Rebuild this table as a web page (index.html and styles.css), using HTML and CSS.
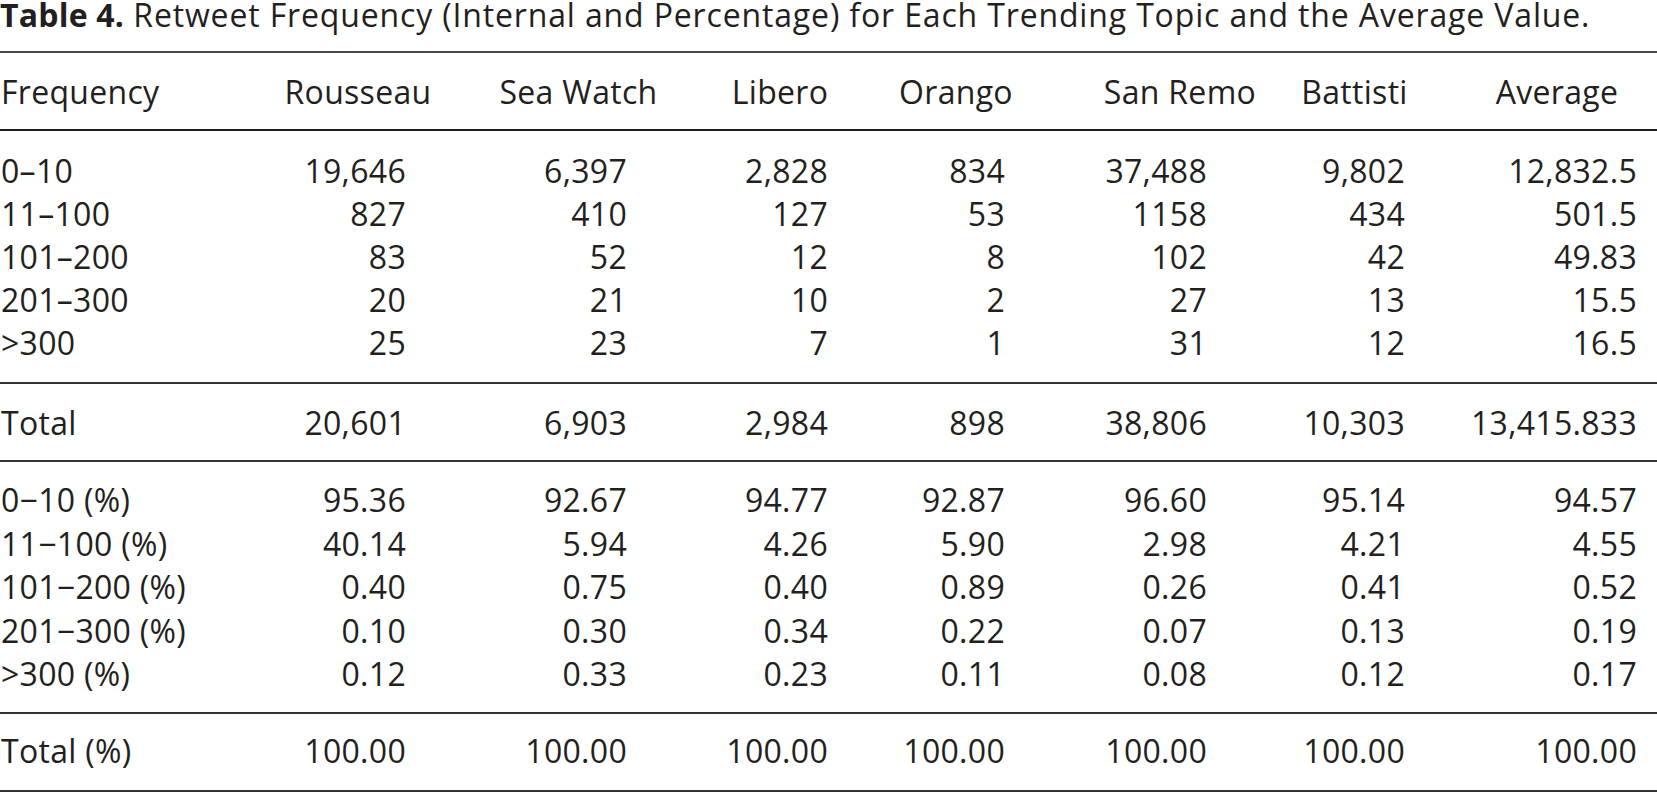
FILE: index.html
```html
<!DOCTYPE html>
<html lang="en">
<head>
<meta charset="utf-8">
<title>Table 4. Retweet Frequency</title>
<link rel="stylesheet" href="styles.css">
</head>
<body>
<div class="page">
  <p class="caption"><span class="label">Table 4.</span> Retweet Frequency (Internal and Percentage) for Each Trending Topic and the Average Value.</p>
  <table class="freq">
    <colgroup>
      <col class="c-label">
      <col class="c-rousseau">
      <col class="c-seawatch">
      <col class="c-libero">
      <col class="c-orango">
      <col class="c-sanremo">
      <col class="c-battisti">
      <col class="c-average">
    </colgroup>
    <thead>
      <tr>
        <th>Frequency</th><th>Rousseau</th><th>Sea Watch</th><th>Libero</th><th>Orango</th><th>San Remo</th><th>Battisti</th><th>Average</th>
      </tr>
    </thead>
    <tbody class="grp-counts">
      <tr><td>0–10</td><td>19,646</td><td>6,397</td><td>2,828</td><td>834</td><td>37,488</td><td>9,802</td><td>12,832.5</td></tr>
      <tr><td>11–100</td><td>827</td><td>410</td><td>127</td><td>53</td><td>1158</td><td>434</td><td>501.5</td></tr>
      <tr><td>101–200</td><td>83</td><td>52</td><td>12</td><td>8</td><td>102</td><td>42</td><td>49.83</td></tr>
      <tr><td>201–300</td><td>20</td><td>21</td><td>10</td><td>2</td><td>27</td><td>13</td><td>15.5</td></tr>
      <tr><td>&gt;300</td><td>25</td><td>23</td><td>7</td><td>1</td><td>31</td><td>12</td><td>16.5</td></tr>
    </tbody>
    <tbody class="grp-total">
      <tr><td>Total</td><td>20,601</td><td>6,903</td><td>2,984</td><td>898</td><td>38,806</td><td>10,303</td><td>13,415.833</td></tr>
    </tbody>
    <tbody class="grp-pct">
      <tr><td>0−10 (%)</td><td>95.36</td><td>92.67</td><td>94.77</td><td>92.87</td><td>96.60</td><td>95.14</td><td>94.57</td></tr>
      <tr><td>11−100 (%)</td><td>40.14</td><td>5.94</td><td>4.26</td><td>5.90</td><td>2.98</td><td>4.21</td><td>4.55</td></tr>
      <tr><td>101−200 (%)</td><td>0.40</td><td>0.75</td><td>0.40</td><td>0.89</td><td>0.26</td><td>0.41</td><td>0.52</td></tr>
      <tr><td>201−300 (%)</td><td>0.10</td><td>0.30</td><td>0.34</td><td>0.22</td><td>0.07</td><td>0.13</td><td>0.19</td></tr>
      <tr><td>&gt;300 (%)</td><td>0.12</td><td>0.33</td><td>0.23</td><td>0.11</td><td>0.08</td><td>0.12</td><td>0.17</td></tr>
    </tbody>
    <tbody class="grp-pct-total">
      <tr><td>Total (%)</td><td>100.00</td><td>100.00</td><td>100.00</td><td>100.00</td><td>100.00</td><td>100.00</td><td>100.00</td></tr>
    </tbody>
  </table>
</div>
</body>
</html>
```

FILE: styles.css
```css
html, body {
  margin: 0;
  padding: 0;
  background: #ffffff;
}

.page {
  width: 1657px;
  font-family: "Open Sans", "Noto Sans", sans-serif;
  font-size: 32px;
  color: #231f20;
}

.caption {
  margin: 0 0 22px 0;
  line-height: 29px;
  white-space: nowrap;
  letter-spacing: 0.85px;
}

.caption .label {
  font-weight: 700;
  letter-spacing: 0.2px;
}

.freq {
  width: 100%;
  table-layout: fixed;
  border-collapse: collapse;
  border-top: 2px solid #4a4a4a;
  letter-spacing: 0.3px;
}

.c-label { width: 250px; }
.c-rousseau { width: 190px; }
.c-seawatch { width: 230px; }
.c-libero { width: 180px; }
.c-orango { width: 180px; }
.c-sanremo { width: 260px; }
.c-battisti { width: 140px; }
.c-average { width: 227px; }

.freq th,
.freq td {
  padding: 0;
  line-height: 43px;
  white-space: nowrap;
  font-weight: 400;
}

.freq thead {
  border-bottom: 2px solid #1e1e1e;
}

.freq thead th {
  padding-top: 17px;
  padding-bottom: 16px;
  text-align: center;
}

.freq tbody {
  border-bottom: 2px solid #333;
}

.freq td {
  text-align: right;
}

.freq th:first-child,
.freq td:first-child {
  text-align: left;
  padding-left: 1px;
}

/* vertical rhythm of each row group */
.grp-counts tr:first-child td { padding-top: 18px; }
.grp-counts tr:last-child td { padding-bottom: 18px; }

.grp-total td { padding-top: 17px; padding-bottom: 16px; }

.grp-pct td { line-height: 43.6px; }
.grp-pct tr:first-child td { padding-top: 16px; }
.grp-pct tr:last-child td { padding-bottom: 16px; }

.grp-pct-total td { padding-top: 15px; padding-bottom: 18px; }

/* header centering offsets */
.freq th:nth-child(2) { padding-left: 26px; }
.freq th:nth-child(3) { padding-left: 47px; }
.freq th:nth-child(4) { padding-left: 40px; }
.freq th:nth-child(5) { padding-left: 32px; }
.freq th:nth-child(6) { padding-left: 40px; }
.freq th:nth-child(7) { padding-right: 11px; }
.freq th:nth-child(8) { padding-left: 27px; }

/* numeric column right edges */
.freq td:nth-child(2) { padding-right: 34px; }
.freq td:nth-child(3) { padding-right: 43px; }
.freq td:nth-child(4) { padding-right: 22px; }
.freq td:nth-child(5) { padding-right: 25px; }
.freq td:nth-child(6) { padding-right: 83px; }
.freq td:nth-child(7) { padding-right: 25px; }
.freq td:nth-child(8) { padding-right: 20px; }
```
